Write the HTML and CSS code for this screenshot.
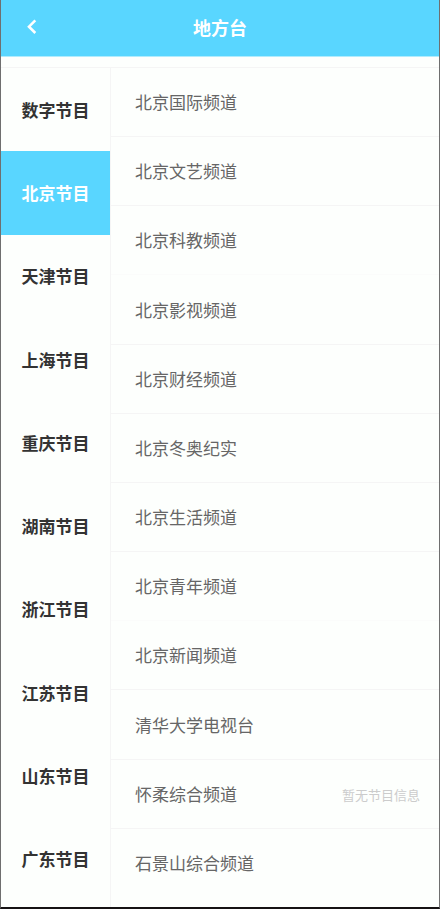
FILE: index.html
```html
<!DOCTYPE html>
<html lang="zh-CN">
<head>
<meta charset="utf-8">
<meta name="viewport" content="width=device-width, initial-scale=1">
<title>地方台</title>
<link rel="stylesheet" href="styles.css">
</head>
<body>
<div class="app">
  <header class="topbar">
    <button class="back" type="button" aria-label="返回">
      <svg class="back-icon" viewBox="0 0 10 16" aria-hidden="true"><path d="M8.3 1.4 2 7.7l6.3 6.3"/></svg>
    </button>
    <h1 class="title">地方台</h1>
  </header>
  <main class="content">
    <nav class="groups">
      <a class="group" href="#">数字节目</a>
      <a class="group active" href="#" aria-current="true">北京节目</a>
      <a class="group" href="#">天津节目</a>
      <a class="group" href="#">上海节目</a>
      <a class="group" href="#">重庆节目</a>
      <a class="group" href="#">湖南节目</a>
      <a class="group" href="#">浙江节目</a>
      <a class="group" href="#">江苏节目</a>
      <a class="group" href="#">山东节目</a>
      <a class="group" href="#">广东节目</a>
    </nav>
    <ul class="channels">
      <li class="channel">北京国际频道</li>
      <li class="channel">北京文艺频道</li>
      <li class="channel">北京科教频道</li>
      <li class="channel">北京影视频道</li>
      <li class="channel">北京财经频道</li>
      <li class="channel">北京冬奥纪实</li>
      <li class="channel">北京生活频道</li>
      <li class="channel">北京青年频道</li>
      <li class="channel">北京新闻频道</li>
      <li class="channel">清华大学电视台</li>
      <li class="channel">怀柔综合频道<span class="note">暂无节目信息</span></li>
      <li class="channel">石景山综合频道</li>
    </ul>
  </main>
</div>
</body>
</html>
```
FILE: styles.css
```css
* {
  box-sizing: border-box;
}

body {
  margin: 0;
  background: #fdfffd;
  font-family: "Noto Sans CJK SC", sans-serif;
}

.app {
  display: flex;
  flex-direction: column;
  min-height: 100vh;
  border: solid #6f6f6f;
  border-width: 0 1px;
  border-bottom: 2px solid #161314;
}

.topbar {
  display: grid;
  grid-template-columns: 60px 1fr 60px;
  align-items: center;
  height: 57px;
  padding-bottom: 2px;
  border-bottom: 1px solid #b0ecfe;
  background: #59d6ff;
  color: #fff;
}

.back {
  display: flex;
  align-items: center;
  height: 54px;
  padding: 0 0 0 26px;
  border: 0;
  background: none;
  color: inherit;
}

.back-icon {
  width: 10px;
  height: 16px;
  fill: none;
  stroke: currentColor;
  stroke-width: 2.6;
}

.title {
  margin: 0;
  font-size: 18px;
  line-height: 24px;
  font-weight: 700;
  text-align: center;
}

.content {
  flex: 1;
  display: grid;
  grid-template-columns: 110px 1fr;
  margin-top: 10px;
  border-top: 1px solid #f5f5f5;
}

.groups {
  display: grid;
  grid-auto-rows: 1fr;
  padding-bottom: 6px;
  border-right: 1px solid #f5f5f5;
}

.group {
  display: flex;
  align-items: center;
  justify-content: center;
  color: #333;
  font-size: 17px;
  line-height: 24px;
  font-weight: 700;
  text-decoration: none;
}

.active {
  background: #59d6ff;
  color: #fff;
}

.channels {
  display: grid;
  grid-auto-rows: 1fr;
  margin: 0;
  padding: 0 0 9px;
  list-style: none;
}

.channel {
  display: flex;
  align-items: center;
  justify-content: space-between;
  padding: 0 19px 0 24px;
  border-bottom: 1px solid #f5f5f5;
  color: #666;
  font-size: 17px;
  line-height: 24px;
}

.channel:nth-child(5n + 3) {
  border-bottom-color: #fbfcfb;
}

.channel:last-child {
  border-bottom: 0;
}

.note {
  padding-top: 2px;
  color: #ccc;
  font-size: 13px;
}
```
